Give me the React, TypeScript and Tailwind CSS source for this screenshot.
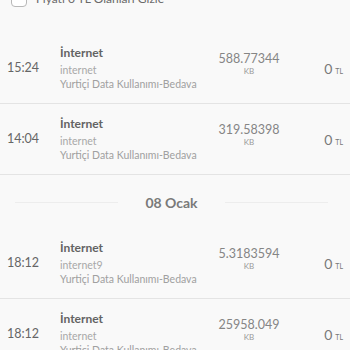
import React from "react"

type Usage = {
    time: string
    title: string
    sub: string
    desc: string
    amount: string
    unit: string
    price: string
}

const groups: { date?: string; items: Usage[] }[] = [
    {
        items: [
            { time: "15:24", title: "İnternet", sub: "internet", desc: "Yurtiçi Data Kullanımı-Bedava", amount: "588.77344", unit: "KB", price: "0" },
            { time: "14:04", title: "İnternet", sub: "internet", desc: "Yurtiçi Data Kullanımı-Bedava", amount: "319.58398", unit: "KB", price: "0" },
        ],
    },
    {
        date: "08 Ocak",
        items: [
            { time: "18:12", title: "İnternet", sub: "internet9", desc: "Yurtiçi Data Kullanımı-Bedava", amount: "5.3183594", unit: "KB", price: "0" },
            { time: "18:12", title: "İnternet", sub: "internet", desc: "Yurtiçi Data Kullanımı-Bedava", amount: "25958.049", unit: "KB", price: "0" },
        ],
    },
]

function UsageRow({ u }: { u: Usage }) {
    return (
        <div className="flex items-center h-[71px] px-[7px] border-b border-[#e4e4e4]">
            <div className="w-[53px] text-[12.5px] text-[#666666]">{u.time}</div>
            <div className="flex-1 flex flex-col">
                <span className="text-[12px] leading-[16px] font-bold text-[#636363]">{u.title}</span>
                <span className="mt-[2px] text-[10.5px] leading-[14px] text-[#a8a8a8]">{u.sub}</span>
                <span className="text-[10.5px] leading-[14px] text-[#a0a0a0]">{u.desc}</span>
            </div>
            <div className="w-[80px] flex flex-col items-center -mt-[8px]">
                <span className="text-[12.5px] leading-[14px] text-[#858585]">{u.amount}</span>
                <span className="text-[8px] leading-[11px] text-[#9a9a9a]">{u.unit}</span>
            </div>
            <div className="w-[54px] text-right text-[#7a7a7a]">
                <span className="text-[14px]">{u.price}</span>
                <span className="text-[7px] ml-[3px]">TL</span>
            </div>
        </div>
    )
}

export default function App() {
    return (
        <div className="w-[350px] h-[350px] overflow-hidden bg-[#f9f9f9]" style={{ fontFamily: "Lato, 'Liberation Sans', sans-serif" }}>
            {/* Filter (scrolled partly out of view) */}
            <div className="flex items-center gap-[9px] h-[30px] -mt-[16px] mb-[19px] pl-[11px]">
                <div className="w-[16px] h-[16px] rounded-[4px] border border-[#b8b8b8] bg-white" />
                <span className="text-[12px] text-[#6a6a6a]">Fiyatı 0 TL Olanları Gizle</span>
            </div>

            {groups.map((g, i) => (
                <div key={i}>
                    {g.date && (
                        <div className="flex items-center h-[53px] pt-[2px] pl-[15px] pr-[22px] gap-[27px]">
                            <div className="flex-1 h-px bg-[#ededed]" />
                            <span className="text-[14px] font-bold text-[#7a7a7a]">{g.date}</span>
                            <div className="flex-1 h-px bg-[#ededed]" />
                        </div>
                    )}
                    {g.items.map((u, j) => (
                        <UsageRow key={j} u={u} />
                    ))}
                </div>
            ))}
        </div>
    )
}
